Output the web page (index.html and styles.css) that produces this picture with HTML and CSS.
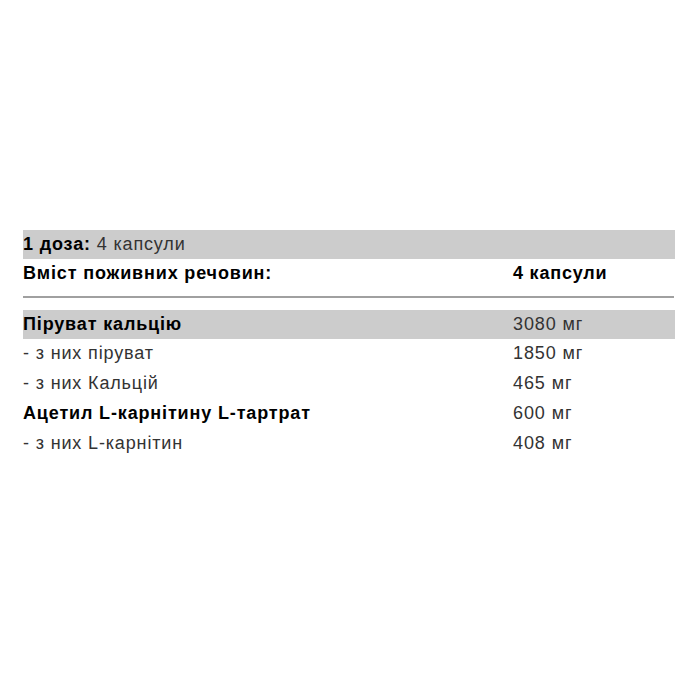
FILE: index.html
```html
<!DOCTYPE html>
<html lang="uk">
<head>
<meta charset="utf-8">
<link rel="stylesheet" href="styles.css">
</head>
<body>
<div class="facts">
  <div class="row shaded"><span class="name"><span class="strong">1 доза:</span> 4 капсули</span></div>
  <div class="row head"><span class="name">Вміст поживних речовин:</span><span class="val">4 капсули</span></div>
  <div class="sep"></div>
  <div class="row shaded"><span class="name bold">Піруват кальцію</span><span class="val">3080 мг</span></div>
  <div class="row"><span class="name">- з них піруват</span><span class="val">1850 мг</span></div>
  <div class="row"><span class="name">- з них Кальцій</span><span class="val">465 мг</span></div>
  <div class="row"><span class="name bold">Ацетил L-карнітину L-тартрат</span><span class="val">600 мг</span></div>
  <div class="row"><span class="name">- з них L-карнітин</span><span class="val">408 мг</span></div>
</div>
</body>
</html>
```
FILE: styles.css
```css
html, body {
  margin: 0;
  padding: 0;
  background: #fff;
}
body {
  font-family: "Liberation Sans", Arial, sans-serif;
  font-size: 18px;
  color: #333;
}
.facts {
  margin: 230px 0 0 23px;
  width: 652px;
}
.row {
  display: flex;
  align-items: center;
  height: 30px;
  padding-bottom: 1px;
  box-sizing: border-box;
}
.row.shaded {
  background: #cccccc;
  height: 29px;
}
.name {
  width: 490px;
  flex: none;
  letter-spacing: 0.85px;
}
.val {
  flex: 1;
  letter-spacing: 0.9px;
}
.head .val {
  letter-spacing: 0.8px;
}
.strong {
  color: #000;
  font-weight: bold;
}
.head {
  font-weight: bold;
  color: #000;
}
.bold {
  font-weight: bold;
  color: #000;
}
.sep {
  height: 2px;
  background: #a0a0a0;
  margin: 7px 1px 12px 0;
}
```
